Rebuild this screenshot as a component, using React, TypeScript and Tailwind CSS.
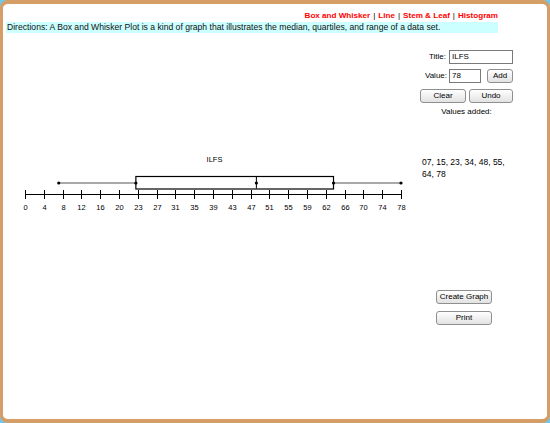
import React from "react";

const FONT = { fontFamily: '"Liberation Sans", Arial, sans-serif' };

const TICKS = [0, 4, 8, 12, 16, 20, 23, 27, 31, 35, 39, 43, 47, 51, 55, 59, 62, 66, 70, 74, 78];

const AXIS_LEFT = 25;
const AXIS_RIGHT = 401;
const MAX = 78;

function xOf(v: number) {
  return AXIS_LEFT + (v / MAX) * (AXIS_RIGHT - AXIS_LEFT);
}

function BoxPlot() {
  const min = 7;
  const q1 = 23;
  const med = 48;
  const q3 = 64;
  const max = 78;
  const step = (AXIS_RIGHT - AXIS_LEFT) / (TICKS.length - 1);

  return (
    <svg width={410} height={80} viewBox="3 140 410 80" style={FONT}>
      <text x={214.5} y={163} fontSize={7.5} textAnchor="middle" fill="#000">
        ILFS
      </text>

      {/* whiskers */}
      <line x1={xOf(min)} y1={184} x2={xOf(max)} y2={184} stroke="#555" strokeWidth={1} />
      {/* box */}
      <rect x={xOf(q1)} y={177.5} width={xOf(q3) - xOf(q1)} height={12.5} fill="white" stroke="#000" strokeWidth={1.2} />
      <line x1={xOf(med)} y1={178} x2={xOf(med)} y2={189.5} stroke="#000" strokeWidth={1} />
      {[min, q1, med, q3, max].map((v) => (
        <circle key={v} cx={xOf(v)} cy={184} r={1.6} fill="#000" />
      ))}

      {/* axis */}
      <line x1={AXIS_LEFT} y1={195.5} x2={AXIS_RIGHT} y2={195.5} stroke="#000" strokeWidth={1} />
      {TICKS.map((t, i) => {
        const x = Math.round(AXIS_LEFT + i * step) + 0.5;
        return (
          <g key={t}>
            <line x1={x} y1={191} x2={x} y2={200} stroke="#000" strokeWidth={1} />
            <text x={x} y={211} fontSize={7.5} textAnchor="middle" fill="#000">
              {t}
            </text>
          </g>
        );
      })}
    </svg>
  );
}

function Btn({ children, className }: { children: React.ReactNode; className?: string }) {
  return (
    <button
      className={`h-[14px] rounded-[3px] border border-[#8f8f8f] bg-gradient-to-b from-[#ffffff] to-[#e2e2e2] text-[8px] leading-[12px] text-black ${className ?? ""}`}
    >
      {children}
    </button>
  );
}

export default function App() {
  return (
    <div className="w-[550px] h-[423px] bg-[#72c8ec]" style={FONT}>
      <div className="w-full h-full rounded-[8px] border-x-[3px] border-t-[4px] border-b-[4px] border-[#d49e66] bg-white flex flex-col">
        {/* nav */}
        <div className="flex justify-end pr-[49px] pt-[6px] text-[8.1px] font-bold leading-[11px] text-[#ff0000]">
          <span>Box and Whisker</span>
          <span className="text-black font-normal px-[3px]">|</span>
          <span>Line</span>
          <span className="text-black font-normal px-[3px]">|</span>
          <span>Stem &amp; Leaf</span>
          <span className="text-black font-normal px-[3px]">|</span>
          <span>Histogram</span>
        </div>

        {/* directions */}
        <div className="ml-[3px] mt-[1px] w-[492px] h-[11px] bg-[#ccffff] pl-[1px] text-[8.6px] leading-[11px] text-[#111]">
          Directions: A Box and Whisker Plot is a kind of graph that illustrates the median, quartiles, and range of a data set.
        </div>

        <div className="flex flex-1">
          {/* chart */}
          <div className="w-[410px] pt-[106px]">
            <BoxPlot />
          </div>

          {/* controls */}
          <div className="flex flex-col pt-[16px] text-[8px] text-black">
            <div className="flex items-center h-[15px]">
              <span className="w-[33px] text-right">Title:</span>
              <input
                readOnly
                value="ILFS"
                className="ml-[3px] w-[64px] h-[14px] border border-[#7a7a7a] px-[2px] text-[8px] outline-none"
              />
            </div>
            <div className="flex items-center h-[15px] mt-[4px]">
              <span className="w-[34px] text-right">Value:</span>
              <input
                readOnly
                value="78"
                className="ml-[2px] w-[32px] h-[14px] border border-[#7a7a7a] px-[2px] text-[8px] outline-none"
              />
              <Btn className="ml-[6px] w-[26px]">Add</Btn>
            </div>
            <div className="flex mt-[6px] pl-[7px] gap-[3px]">
              <Btn className="w-[46px]">Clear</Btn>
              <Btn className="w-[44px]">Undo</Btn>
            </div>
            <div className="mt-[4px] pl-[7px] w-[100px] text-center leading-[10px]">Values added:</div>

            <div className="mt-[39px] pl-[9px] w-[100px] leading-[12px] text-[8.5px]">
              07, 15, 23, 34, 48, 55, 64, 78
            </div>

            <div className="mt-[110px] pl-[23px] flex flex-col gap-[7px]">
              <Btn className="w-[56px]">Create Graph</Btn>
              <Btn className="w-[56px]">Print</Btn>
            </div>
          </div>
        </div>
      </div>
    </div>
  );
}
